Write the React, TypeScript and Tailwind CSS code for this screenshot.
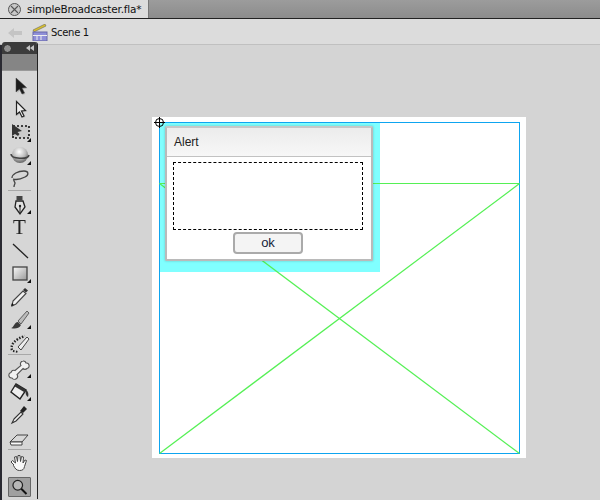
function Tri() {
  return <path d="M24 21h-4l4-4z" fill="#111" />;
}

const icons: Record<string, React.ReactNode> = {
  arrow: (
    <>
      <path d="M10.500 4l0 14 3-3 2.500 5 2.500-1-2.500-5 4.500-.5z" fill="#aaa" opacity=".6" />
      <path d="M9 3l0 14 3.500-3 2.500 5 2.500-1-2.500-5 4.500-.5z" fill="#1c1c1c" stroke="#444" strokeWidth=".5" />
    </>
  ),
  sub: (
    <>
      <path d="M10.500 4l0 14 3-3 2.500 5 2.500-1-2.500-5 4.500-.5z" fill="#aaa" opacity=".6" />
      <path d="M9.500 3.500l0 13 3-2.500 2.500 5 2-1-2.500-5 4-.5z" fill="#eee" stroke="#222" strokeWidth="1.200" />
    </>
  ),
  transform: (
    <>
      <rect x="6" y="5" width="16" height="12" fill="#ccc" stroke="#111" strokeWidth="1.600" strokeDasharray="2 2" />
      <path d="M5 3l0 12 3-2 3 2 1.500-2-2-2 4.500-1z" fill="#333" />
      <Tri />
    </>
  ),
  ball: (
    <>
      <defs>
        <radialGradient id="bg" cx=".45" cy=".3" r=".75">
          <stop offset="0" stopColor="#fff" />
          <stop offset=".55" stopColor="#bbb" />
          <stop offset="1" stopColor="#555" />
        </radialGradient>
      </defs>
      <circle cx="13" cy="11" r="8" fill="url(#bg)" />
      <path d="M4 10c0 5 17 6 18 1" fill="none" stroke="#444" strokeWidth="1.500" />
      <Tri />
    </>
  ),
  lasso: (
    <path d="M5 11c0-4 6-7 12-7 5 0 5 4 1 6-4 2-9 3-12 2M7 12c-1 2 1 3 1 4s-1 2-1 4" fill="none" stroke="#444" strokeWidth="1.300" />
  ),
  pen: (
    <>
      <path d="M9 8h7l2 6-5 7-5-7z" fill="#e2e2e2" stroke="#222" strokeWidth="1.300" />
      <rect x="9.500" y="3" width="6" height="4" fill="#444" />
      <path d="M13 14v6" stroke="#222" />
      <circle cx="13" cy="13" r="1.200" fill="#222" />
      <Tri />
    </>
  ),
  line: <path d="M6 5l15 14" stroke="#222" strokeWidth="1.300" fill="none" />,
  rect: (
    <>
      <defs>
        <linearGradient id="rg" x1="0" y1="0" x2="1" y2="1">
          <stop offset="0" stopColor="#fafafa" />
          <stop offset="1" stopColor="#999" />
        </linearGradient>
      </defs>
      <rect x="6" y="5" width="14" height="13" fill="url(#rg)" stroke="#444" strokeWidth="1.300" />
      <Tri />
    </>
  ),
  pencil: (
    <>
      <path d="M6 16L16 6l3 2.500L9 19l-4 2z" fill="#f0f0f0" stroke="#444" strokeWidth="1.100" />
      <path d="M16 5l2-2 3 2.500-2 2z" fill="#333" />
      <path d="M4 21l1-3 2 2z" fill="#111" />
    </>
  ),
  brush: (
    <>
      <path d="M11 13L20 3l2 2-8 11z" fill="#bbb" stroke="#444" strokeWidth=".8" />
      <path d="M4 20c3 0 3-6 7-6l3 3c-2 4-7 4-10 3z" fill="#3a3a3a" />
      <Tri />
    </>
  ),
  deco: (
    <>
      <path d="M11 16L20 6l2 2-8 11z" fill="#eee" stroke="#333" strokeWidth=".9" />
      <path d="M5 19c-2-5 3-11 13-14" fill="none" stroke="#222" strokeWidth="2.400" strokeDasharray="1.500 1.500" />
      <path d="M6 20l5 1" stroke="#222" strokeWidth="2" strokeDasharray="1.500 1.500" />
    </>
  ),
  bone: (
    <>
      <path d="M5 21a2.800 2.800 0 0 1-1-5.500 2.800 2.800 0 0 1 4-2l6-5a2.800 2.800 0 0 1 2-4.500 2.800 2.800 0 0 1 3 2 2.800 2.800 0 0 1 1 5.500 2.800 2.800 0 0 1-4 0l-6 6a2.800 2.800 0 0 1-5 3.500z" fill="#f2f2f2" stroke="#555" strokeWidth="1.100" />
      <Tri />
    </>
  ),
  bucket: (
    <>
      <path d="M4 12l5-8 10 6-6 9z" fill="#eee" stroke="#222" strokeWidth="1.400" />
      <path d="M9 4l10 6-2 2L7 6z" fill="#333" />
      <path d="M19 10c2 1 3 4 2 7-2-1-3-4-2-7z" fill="#333" />
      <Tri />
    </>
  ),
  dropper: (
    <>
      <path d="M7 16l7-7 2 2-7 7-4 2z" fill="#f2f2f2" stroke="#333" strokeWidth="1.100" />
      <path d="M13 8l4-5 3 3-4 4z" fill="#222" />
    </>
  ),
  eraser: (
    <>
      <path d="M3 16l7-7h11l-6 7z" fill="#d8d8d8" stroke="#333" strokeWidth=".9" />
      <path d="M3 16h12v3H4z" fill="#fafafa" stroke="#333" strokeWidth=".9" />
    </>
  ),
  hand: (
    <path d="M7 13l-3-3 1.500-1.500 3 2.500-1-6 2-.5 1 5 .5-6h2l.5 6 1-5 2 .5-.5 6 2-3 1.500.5-2 6c-.5 3-2 4-5 4-3 0-4.500-2-6-5z" fill="#f8f8f8" stroke="#444" strokeWidth="1" />
  ),
  zoom: (
    <>
      <circle cx="10" cy="9" r="5.500" fill="#b8b8b8" stroke="#222" strokeWidth="1.400" />
      <path d="M14 13l6 6" stroke="#111" strokeWidth="2.200" />
    </>
  ),
};

function Tool({ name }: { name: string }) {
  return (
    <div className="h-[23px] flex items-center justify-center">
      <svg width="26" height="23" viewBox="0 0 26 23" className="blur-[0.45px]">
        {icons[name]}
      </svg>
    </div>
  );
}

function Sep() {
  return (
    <div className="h-[3px] px-[6px] flex items-start">
      <div className="h-px w-full bg-[#a8a8a8]" />
    </div>
  );
}

function Toolbar() {
  return (
    <div className="-mt-[3px] w-[36px] h-[457px] shrink-0 flex flex-col bg-[#d6d6d6] border-r border-[#222] rounded-t-[3px] relative z-10 overflow-hidden">
      <div className="h-[12px] bg-[#3c3c3c] flex items-center justify-between pl-[1px] pr-[3px] shrink-0">
        <div className="w-[9px] h-[9px] rounded-full bg-[#8f8f8f] border border-[#2a2a2a]" />
        <svg width="8" height="6" viewBox="0 0 8 6" className="shrink-0">
          <path d="M4 0v6L0 3zM8 0v6L4 3z" fill="#c4c4c4" />
        </svg>
      </div>
      <div className="h-[17px] bg-[#858585] border-b border-[#999] shrink-0" />
      <div className="pt-[4px] flex flex-col">
        <Tool name="arrow" />
        <Tool name="sub" />
        <Tool name="transform" />
        <Tool name="ball" />
        <Tool name="lasso" />
        <Sep />
        <Tool name="pen" />
        <div className="h-[23px] flex items-center justify-center text-[21px] leading-none font-['Liberation_Serif',serif] text-[#222] blur-[0.3px]">T</div>
        <Tool name="line" />
        <Tool name="rect" />
        <Tool name="pencil" />
        <Tool name="brush" />
        <Tool name="deco" />
        <Sep />
        <Tool name="bone" />
        <Tool name="bucket" />
        <Tool name="dropper" />
        <Tool name="eraser" />
        <Sep />
        <Tool name="hand" />
        <div className="h-[23px] flex items-center justify-center">
          <div className="w-[23px] h-[20px] bg-[#a0a0a0] border border-[#666] rounded-[1px] flex items-center justify-center">
            <svg width="22" height="20" viewBox="0 0 24 22" className="blur-[0.4px]">{icons.zoom}</svg>
          </div>
        </div>
      </div>
    </div>
  );
}

function Stage() {
  return (
    <div className="absolute left-[152px] top-[117px] w-[374px] h-[341px] bg-white">
      {/* selection highlight */}
      <div className="absolute left-[8px] top-[6px] w-[220px] h-[149px] bg-[#80ffff]" />
      {/* blue stage outline */}
      <div className="absolute left-[7px] top-[5px] w-[361px] h-[332px] border border-[#0ea5f0]" />
      <svg className="absolute left-0 top-0" width="374" height="341" viewBox="0 0 374 341">
        <g stroke="#55f055" fill="none">
          <path d="M7.500 66.500H367.500" strokeWidth="1" />
          <path d="M7.500 66.500L367.500 336.500" strokeWidth="1.200" />
          <path d="M7.500 336.500L367.500 66.500" strokeWidth="1.200" />
        </g>
      </svg>
      {/* alert */}
      <div className="absolute left-[13px] top-[9px] w-[208px] h-[135px] bg-white border-2 border-[#bababa] border-t-[#c8c8c8] rounded-[2px] shadow-[0_0_2px_1px_rgba(0,0,0,0.1)] flex flex-col font-['Liberation_Sans',sans-serif]">
        <div className="h-[29px] shrink-0 bg-gradient-to-b from-[#ececec] to-[#f7f7f7] border-b border-[#c2c2c2] flex items-center pl-[7px] text-[12px] text-[#222]">
          Alert
        </div>
        <div className="ml-[6px] mt-[5px] w-[190px] h-[68px] border border-dashed border-black bg-white" />
        <div className="flex mt-[2px] pl-[66px]">
          <div className="w-[70px] h-[22px] bg-[#f4f4f4] border-2 border-[#aaa] rounded-[4px] flex items-center justify-center text-[13px] text-[#14233a]">
            ok
          </div>
        </div>
      </div>
      {/* registration mark */}
      <svg className="absolute left-[2px] top-0" width="11" height="11" viewBox="0 0 11 11">
        <circle cx="5.500" cy="5.500" r="4" fill="none" stroke="#000" />
        <path d="M5.500 0v11M0 5.500h11" stroke="#000" />
      </svg>
    </div>
  );
}

export default function App() {
  return (
    <div className="w-[600px] h-[500px] overflow-hidden bg-[#d4d4d4] flex flex-col font-['DejaVu_Sans',sans-serif] relative">
      <div className="h-[18px] shrink-0 bg-gradient-to-b from-[#9c9c9c] to-[#8c8c8c] flex">
        <div className="w-[149px] bg-[#dcdcdc] border-r border-[#777] flex items-center pl-[8px] gap-[6px]">
          <div className="w-[13px] h-[13px] rounded-full bg-[#c8c8c8] border border-[#555] flex items-center justify-center">
            <svg width="9" height="9" viewBox="0 0 9 9">
              <path d="M1 1l7 7M8 1L1 8" stroke="#555" strokeWidth="1.100" />
            </svg>
          </div>
          <span className="text-[10.5px] tracking-[-0.2px] text-[#111] whitespace-nowrap leading-none">simpleBroadcaster.fla*</span>
        </div>
      </div>
      <div className="h-px shrink-0 bg-[#222]" />
      <div className="h-[26px] shrink-0 bg-[#dcdcdc] border-b border-[#c0c0c0] flex items-center pl-[8px] pt-[2px]">
        <svg width="14" height="12" viewBox="0 0 14 12" className="shrink-0">
          <path d="M0 6l6-5v3h8v4H6v3z" fill="#c4c4c4" />
        </svg>
        <svg width="16" height="17" viewBox="0 0 16 17" className="ml-[10px] shrink-0">
          <path d="M1 6L13 0l1 2L2 8z" fill="#d8c030" stroke="#555" strokeWidth=".5" />
          <rect x="1" y="8" width="14" height="9" fill="#8f8fd8" stroke="#6868a8" />
          <path d="M1 11.500h14" stroke="#eee" />
          <path d="M5 12v4M9 12v4" stroke="#eee" />
        </svg>
        <span className="ml-[3px] text-[10px] tracking-[-0.3px] text-[#111] whitespace-nowrap">Scene 1</span>
      </div>
      <div className="flex-1 flex min-h-0">
        <div className="w-[2px] shrink-0 bg-[#2a2a32]" />
        <Toolbar />
      </div>
      <Stage />
    </div>
  );
}
